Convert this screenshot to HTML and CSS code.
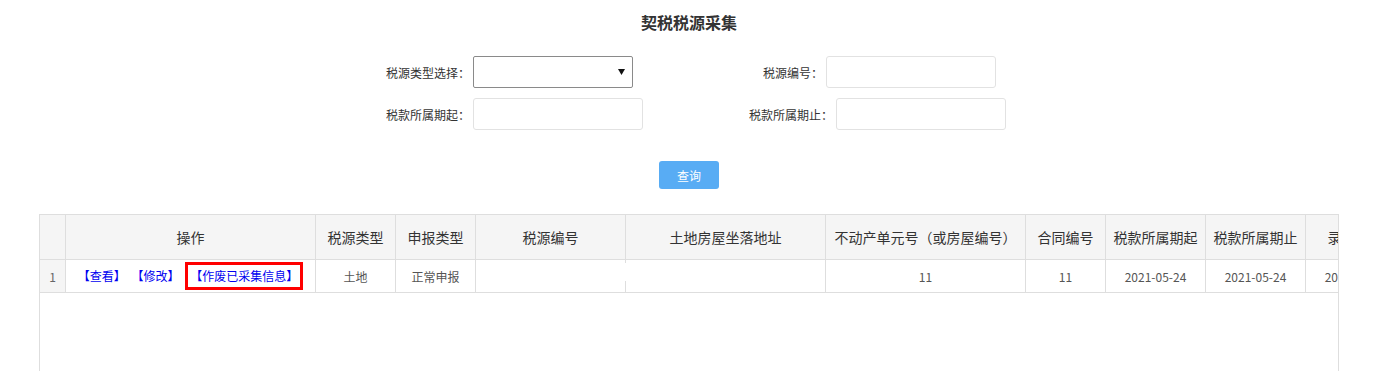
FILE: index.html
```html
<!DOCTYPE html>
<html lang="zh-CN">
<head>
  <meta charset="UTF-8" />
  <title>契税税源采集</title>
  <link rel="stylesheet" href="styles.css">
</head>
<body>
  <div class="page">
    <h1 class="page-title">契税税源采集</h1>

    <form class="search-form">
      <div class="form-row">
        <label class="form-label">税源类型选择：</label>
        <div class="select-box">
          <select class="form-select"></select>
          <svg class="select-arrow" width="7" height="6" viewBox="0 0 7 6"><path d="M0 0H7L3.5 6Z" fill="#111"/></svg>
        </div>
        <label class="form-label">税源编号：</label>
        <input class="form-input" type="text">
      </div>
      <div class="form-row">
        <label class="form-label">税款所属期起：</label>
        <input class="form-input" type="text">
        <label class="form-label">税款所属期止：</label>
        <input class="form-input" type="text">
      </div>
    </form>

    <div class="form-actions">
      <button class="btn-query" type="button">查询</button>
    </div>

    <div class="grid">
      <table class="grid-table">
        <colgroup>
          <col style="width:26px">
          <col style="width:250px">
          <col style="width:80px">
          <col style="width:80px">
          <col style="width:150px">
          <col style="width:200px">
          <col style="width:200px">
          <col style="width:80px">
          <col style="width:100px">
          <col style="width:100px">
          <col style="width:100px">
        </colgroup>
        <thead>
          <tr>
            <th class="row-no"></th>
            <th>操作</th>
            <th>税源类型</th>
            <th>申报类型</th>
            <th>税源编号</th>
            <th>土地房屋坐落地址</th>
            <th>不动产单元号（或房屋编号）</th>
            <th>合同编号</th>
            <th>税款所属期起</th>
            <th>税款所属期止</th>
            <th>录入日期</th>
          </tr>
        </thead>
        <tbody>
          <tr>
            <td class="row-no">1</td>
            <td class="ops">
              <a href="#" class="op-link">【查看】</a>
              <a href="#" class="op-link">【修改】</a>
              <span class="op-mark"><a href="#" class="op-link">【作废已采集信息】</a></span>
            </td>
            <td>土地</td>
            <td>正常申报</td>
            <td class="cell-broken"></td>
            <td></td>
            <td>11</td>
            <td>11</td>
            <td>2021-05-24</td>
            <td>2021-05-24</td>
            <td>2021-05-24</td>
          </tr>
        </tbody>
      </table>
    </div>
  </div>
</body>
</html>
```

FILE: styles.css
```css
* {
  margin: 0;
  padding: 0;
  box-sizing: border-box;
}

body {
  font-family: "Noto Sans CJK SC", "Noto Sans", sans-serif;
  font-size: 12px;
  color: #333;
  background: #fff;
}

.page {
  padding-right: 4px;
}

.page-title {
  padding-top: 11px;
  font-size: 16px;
  line-height: 22px;
  font-weight: bold;
  text-align: center;
  color: #333;
}

/* search form */
.search-form {
  width: 818px;
  margin: 23px auto 0;
  display: flex;
  flex-direction: column;
  gap: 10px;
}

.form-row {
  display: flex;
  align-items: center;
  height: 32px;
}

.form-label {
  width: 190px;
  margin-right: 3px;
  text-align: right;
  font-size: 12px;
  color: #333;
}

.form-input {
  width: 170px;
  height: 32px;
  border: 1px solid #e2e2e2;
  border-radius: 3px;
  outline: none;
}

.select-box {
  position: relative;
  width: 160px;
  height: 32px;
}

.form-select {
  appearance: none;
  width: 100%;
  height: 100%;
  border: 1px solid #8a8a8a;
  border-radius: 2px;
  background: #fff;
}

.select-arrow {
  position: absolute;
  right: 8px;
  top: 13px;
}

.form-actions {
  margin-top: 31px;
  text-align: center;
}

.btn-query {
  width: 60px;
  height: 28px;
  border: none;
  border-radius: 3px;
  background: #58acf4;
  color: #fff;
  font-family: inherit;
  font-size: 12px;
}

/* data grid */
.grid {
  margin: 25px 0 0 39px;
  width: 1300px;
  height: 300px;
  border: 1px solid #dedede;
  border-bottom: none;
  overflow: hidden;
}

.grid-table {
  width: 1366px;
  table-layout: fixed;
  border-collapse: separate;
  border-spacing: 0;
}

.grid-table th,
.grid-table td {
  border-right: 1px solid #dedede;
  border-bottom: 1px solid #dedede;
  text-align: center;
  white-space: nowrap;
  overflow: hidden;
}

.grid-table th {
  height: 45px;
  background: #f5f5f5;
  font-size: 14px;
  font-weight: normal;
  color: #333;
}

.grid-table td {
  height: 33px;
  font-size: 12px;
  color: #555;
}

.grid-table .row-no {
  background: #f5f5f5;
  color: #666;
}

.grid-table .cell-broken {
  border-right-color: transparent;
  background-origin: border-box;
  background-image: linear-gradient(#dedede, #dedede), linear-gradient(#dedede, #dedede);
  background-size: 1px 3px, 1px 12px;
  background-position: right top, right bottom;
  background-repeat: no-repeat;
}

.ops {
  word-spacing: 3px;
}

.op-link {
  color: #0000f0;
  text-decoration: none;
  word-spacing: 0;
}

.op-mark {
  display: inline-block;
  padding: 2px 2px;
  border: 3px solid #f00;
  line-height: 18px;
}
```
